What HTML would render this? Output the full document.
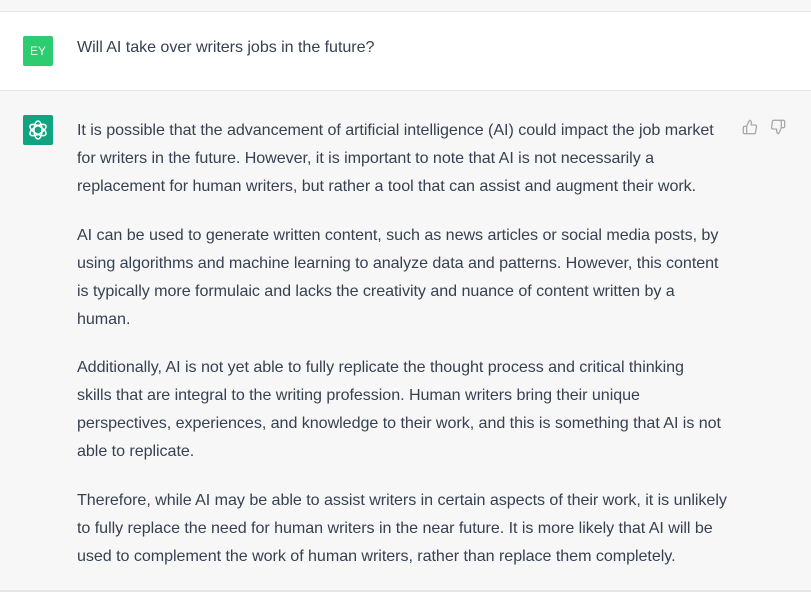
<!DOCTYPE html>
<html><head><meta charset="utf-8"><style>
body{margin:0;width:811px;height:604px;background:#fff;font-family:"Liberation Sans",sans-serif;color:#374151;overflow:hidden;position:relative}
.top{position:absolute;left:0;top:0;width:811px;height:11px;background:#f7f7f8;border-bottom:1px solid #e5e5e5}
.q{position:absolute;left:0;top:12px;width:811px;height:78px;background:#fff;border-bottom:1px solid #e5e5e5}
.a{position:absolute;left:0;top:91px;width:811px;height:499px;background:#f7f7f8;border-bottom:2px solid #e5e5e5}
.av{position:absolute;left:23px;width:30px;height:30px;border-radius:2px;color:#fff;font-size:12px;display:flex;align-items:center;justify-content:center}
.t{position:absolute;left:77px;font-size:16.1px;line-height:28px;white-space:nowrap;letter-spacing:-0.05px}
p{margin:0 0 20.5px 0}
</style></head><body>
<div class="top"></div>
<div class="q">
<div class="av" style="top:24px;background:#2ecc71;color:#e8fff0">EY</div>
<div class="t" style="top:21px">Will AI take over writers jobs in the future?</div>
</div>
<div class="a">
<div class="av" style="top:24px;background:#10a37f"><svg width="24" height="24" viewBox="0 0 24 24" fill="none" stroke="#fff" stroke-width="1.5"><ellipse cx="12" cy="12" rx="4" ry="9"/><ellipse cx="12" cy="12" rx="4" ry="9" transform="rotate(60 12 12)"/><ellipse cx="12" cy="12" rx="4" ry="9" transform="rotate(120 12 12)"/></svg></div>
<svg style="position:absolute;left:742px;top:28px" width="16" height="16" viewBox="0 0 24 24" fill="none" stroke="#aaa" stroke-width="2" stroke-linecap="round" stroke-linejoin="round"><path d="M7 22H4a2 2 0 0 1-2-2v-7a2 2 0 0 1 2-2h3m7-2V5a3 3 0 0 0-3-3l-4 9v11h11.3a2 2 0 0 0 2-1.7l1.4-9a2 2 0 0 0-2-2.3z"/></svg>
<svg style="position:absolute;left:770px;top:28px" width="16" height="16" viewBox="0 0 24 24" fill="none" stroke="#aaa" stroke-width="2" stroke-linecap="round" stroke-linejoin="round"><path d="M17 2h3a2 2 0 0 1 2 2v7a2 2 0 0 1-2 2h-3m-7 2v4a3 3 0 0 0 3 3l4-9V2H5.7a2 2 0 0 0-2 1.7l-1.4 9a2 2 0 0 0 2 2.3z"/></svg>
<div class="t" style="top:25px">
<p>It is possible that the advancement of artificial intelligence (AI) could impact the job market<br>for writers in the future. However, it is important to note that AI is not necessarily a<br>replacement for human writers, but rather a tool that can assist and augment their work.</p>
<p>AI can be used to generate written content, such as news articles or social media posts, by<br>using algorithms and machine learning to analyze data and patterns. However, this content<br>is typically more formulaic and lacks the creativity and nuance of content written by a<br>human.</p>
<p>Additionally, AI is not yet able to fully replicate the thought process and critical thinking<br>skills that are integral to the writing profession. Human writers bring their unique<br>perspectives, experiences, and knowledge to their work, and this is something that AI is not<br>able to replicate.</p>
<p>Therefore, while AI may be able to assist writers in certain aspects of their work, it is unlikely<br>to fully replace the need for human writers in the near future. It is more likely that AI will be<br>used to complement the work of human writers, rather than replace them completely.</p>
</div>
</div>
</body></html>
